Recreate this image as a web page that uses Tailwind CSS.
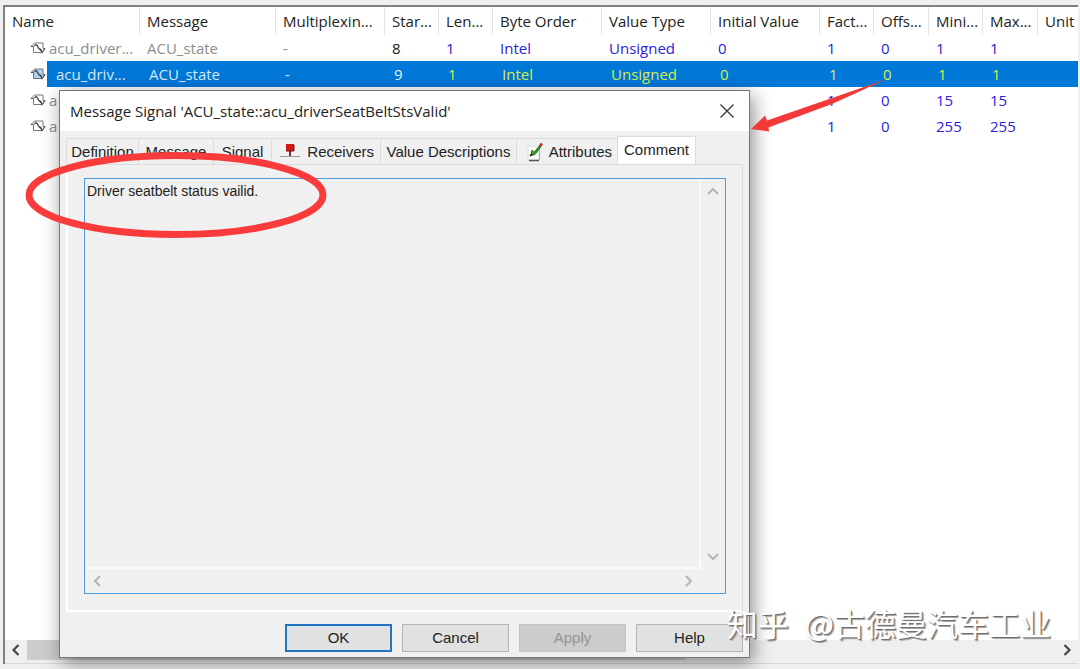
<!DOCTYPE html>
<html lang="en">
<head>
    <meta charset="UTF-8">
    <meta name="viewport" content="width=device-width, initial-scale=1.0">
    <title>Message Signal</title>
    <script src="https://cdn.jsdelivr.net/npm/@tailwindcss/browser@4"></script>
</head>
<body class="relative h-screen overflow-hidden bg-[#efefef] font-['Open_Sans',sans-serif] text-[15px] text-[#222]">
    <svg class="hidden">
        <symbol id="signal" viewBox="0 0 16 14">
            <path d="M1 5.500 4.500 2H13v5.500h2L12 11.500H3.500V5.500z" stroke="#777" />
            <path d="M1 5.500h2.500M10 7.500l2 4 3-4" fill="none" stroke="#555" stroke-width="1.200" />
            <path d="M4.500 5C6.500 2 7.500 5 8.500 7s2 2.500 3.500 2.500" fill="none" stroke="#444" stroke-width="1.400" />
        </symbol>
    </svg>

    <main class="h-full pt-[5px] pr-[2px] pb-[5px] pl-[3px] flex flex-col">
        <div class="flex-1 min-h-0 flex flex-col bg-white border-t-2 border-l-2 border-[#808080]">
            <div class="flex-1 min-h-0">
                <table class="w-full table-fixed border-separate border-spacing-0 text-left whitespace-nowrap">
                    <colgroup>
                        <col class="w-[135px]">
                        <col class="w-[136px]">
                        <col class="w-[109px]">
                        <col class="w-[54px]">
                        <col class="w-[54px]">
                        <col class="w-[109px]">
                        <col class="w-[109px]">
                        <col class="w-[109px]">
                        <col class="w-[54px]">
                        <col class="w-[55px]">
                        <col class="w-[54px]">
                        <col class="w-[55px]">
                        <col>
                    </colgroup>
                    <thead>
                        <tr class="h-7 [&>th]:p-0 [&>th]:pl-[7px] [&>th]:font-normal [&>th]:border-r [&>th]:border-[#e2e2e2] [&>th:last-child]:border-r-0">
                            <th>Name</th>
                            <th>Message</th>
                            <th>Multiplexin...</th>
                            <th>Star...</th>
                            <th>Len...</th>
                            <th>Byte Order</th>
                            <th>Value Type</th>
                            <th>Initial Value</th>
                            <th>Fact...</th>
                            <th>Offs...</th>
                            <th>Mini...</th>
                            <th>Max...</th>
                            <th>Unit</th>
                        </tr>
                    </thead>
                    <tbody class="text-[#2a22dd] [&>tr]:h-[26px] [&_td]:p-0 [&_td]:pl-[7px]">
                        <tr>
                            <td class="text-[#8c8c8c]">
                                <div class="flex items-center pl-[18px]">
                                    <svg class="w-4 h-[14px] mr-[3px] shrink-0" fill="#fff"><use href="#signal" /></svg>
                                    <span>acu_driver...</span>
                                </div>
                            </td>
                            <td class="text-[#8c8c8c]">ACU_state</td>
                            <td class="text-[#8c8c8c]">-</td>
                            <td class="text-[#222]">8</td>
                            <td>1</td>
                            <td>Intel</td>
                            <td>Unsigned</td>
                            <td>0</td>
                            <td>1</td>
                            <td>0</td>
                            <td>1</td>
                            <td>1</td>
                            <td></td>
                        </tr>
                        <tr class="text-[#d4ee4c] [&>td]:bg-[#0078d7] [&>td]:pl-[9px] [&>td:first-child]:bg-transparent [&>td:first-child]:pl-[7px]">
                            <td class="text-[#d5e9fa]">
                                <div class="flex items-center h-[26px] pl-[18px]">
                                    <svg class="w-4 h-[14px] mr-px shrink-0" fill="#a8d2f2"><use href="#signal" /></svg>
                                    <span class="flex-1 flex items-center h-full bg-[#0078d7] pl-[9px]">acu_driv...</span>
                                </div>
                            </td>
                            <td class="text-[#d5e9fa]">ACU_state</td>
                            <td class="text-[#d5e9fa]">-</td>
                            <td class="text-[#e6f2fc]">9</td>
                            <td>1</td>
                            <td>Intel</td>
                            <td>Unsigned</td>
                            <td>0</td>
                            <td>1</td>
                            <td>0</td>
                            <td>1</td>
                            <td>1</td>
                            <td></td>
                        </tr>
                        <tr>
                            <td class="text-[#8c8c8c]">
                                <div class="flex items-center pl-[18px]">
                                    <svg class="w-4 h-[14px] mr-[3px] shrink-0" fill="#fff"><use href="#signal" /></svg>
                                    <span>a</span>
                                </div>
                            </td>
                            <td></td>
                            <td></td>
                            <td></td>
                            <td></td>
                            <td></td>
                            <td></td>
                            <td></td>
                            <td>1</td>
                            <td>0</td>
                            <td>15</td>
                            <td>15</td>
                            <td></td>
                        </tr>
                        <tr>
                            <td class="text-[#8c8c8c]">
                                <div class="flex items-center pl-[18px]">
                                    <svg class="w-4 h-[14px] mr-[3px] shrink-0" fill="#fff"><use href="#signal" /></svg>
                                    <span>a</span>
                                </div>
                            </td>
                            <td></td>
                            <td></td>
                            <td></td>
                            <td></td>
                            <td></td>
                            <td></td>
                            <td></td>
                            <td>1</td>
                            <td>0</td>
                            <td>255</td>
                            <td>255</td>
                            <td></td>
                        </tr>
                    </tbody>
                </table>
            </div>
            <!-- list scrollbar -->
            <div class="flex h-6 bg-[#efefef] border-b border-[#d8d8d8]">
                <button type="button" aria-label="Scroll left" class="w-[22px] h-5 flex items-center justify-center">
                    <svg class="w-2 h-3" viewBox="0 0 8 12" fill="none" stroke="#444" stroke-width="2.200"><path d="M6.500 1 1.500 6l5 5" /></svg>
                </button>
                <div class="flex-1 flex h-5"><div class="w-[64%] bg-[#cdcdcd]"></div></div>
                <button type="button" aria-label="Scroll right" class="w-[22px] h-5 flex items-center justify-center">
                    <svg class="w-2 h-3" viewBox="0 0 8 12" fill="none" stroke="#444" stroke-width="2.200"><path d="m1.500 1 5 5-5 5" /></svg>
                </button>
            </div>
        </div>
    </main>

    <section role="dialog" aria-labelledby="dialog-title" class="absolute left-[59px] top-[90px] w-[691px] bg-[#f0f0f0] border border-[#777] shadow-[3px_5px_18px_rgba(0,0,0,0.45)]">
        <header class="flex items-center justify-between h-10 bg-white pl-[10px] pr-[14px]">
            <h1 id="dialog-title">Message Signal 'ACU_state::acu_driverSeatBeltStsValid'</h1>
            <button type="button" aria-label="Close">
                <svg class="w-4 h-4" viewBox="0 0 16 16" fill="none" stroke="#333" stroke-width="1.300"><path d="m1.500 1.500 13 13m0-13-13 13" /></svg>
            </button>
        </header>

        <div class="px-[6px] pt-[5px] font-['Liberation_Sans',sans-serif]">
            <div role="tablist" class="flex items-end text-[15px] leading-6">
                <button type="button" role="tab" class="w-[73px] h-[26px] border-t border-x border-[#dcdcdc]">Definition</button>
                <button type="button" role="tab" class="w-[75px] h-[26px] border-t border-r border-[#dcdcdc]">Message</button>
                <button type="button" role="tab" class="w-[58px] h-[26px] border-t border-r border-[#dcdcdc]">Signal</button>
                <button type="button" role="tab" class="w-[109px] h-[26px] flex justify-between items-center pl-[8px] pr-[6px] border-t border-r border-[#dcdcdc]">
                    <svg class="w-5 h-4" viewBox="0 0 20 16"><path d="M0 12.500h20" stroke="#999" /><path d="M10 7v5" stroke="#733" stroke-width="2" /><path d="M6 0h8v7H6z" fill="#d01818" /><path d="M6 7h8V1" fill="none" stroke="#801010" /></svg>
                    Receivers
                </button>
                <button type="button" role="tab" class="w-[136px] h-[26px] border-t border-r border-[#dcdcdc]">Value Descriptions</button>
                <button type="button" role="tab" class="w-[100px] h-[26px] flex justify-between items-center pl-[10px] pr-[5px] border-t border-[#dcdcdc]">
                    <svg class="w-4 h-5" viewBox="0 0 16 20"><path d="M1 4h11v14H1z" fill="#fafafa" stroke="#ddd" /><path d="M2 18.500h10" stroke="#555" stroke-width="1.500" /><path d="M12.500 6v12" stroke="#aaa" /><path d="m5 8 2 2.500L13 3l1 1.500-6 8-4 1z" fill="#3c9a22" stroke="#286d18" /><path d="m3 14 2-2" stroke="#222" stroke-width="1.500" /><path d="m13 4 2-2.500" stroke="#c22" stroke-width="2.500" /></svg>
                    Attributes
                </button>
                <button type="button" role="tab" aria-selected="true" class="w-[79px] h-7 pb-[2px] bg-white border-t border-x border-[#dcdcdc]">Comment</button>
            </div>

            <div role="tabpanel" class="px-4 pt-[13px] pb-4 border-t border-r border-[#dcdcdc] border-l-2 border-l-white border-b-2 border-b-white">
                <div class="grid grid-cols-[1fr_24px] grid-rows-[390px_24px] border border-[#4a9be0]">
                    <textarea aria-label="Comment" class="resize-none outline-none px-[2px] text-sm leading-6 border-r-2 border-b-2 border-[#fafafa]">Driver seatbelt status vailid.</textarea>
                    <div class="flex flex-col justify-between items-center py-2">
                        <svg class="w-3 h-2" viewBox="0 0 12 8" fill="none" stroke="#b5b5b5" stroke-width="2"><path d="m1 7 5-5 5 5" /></svg>
                        <svg class="w-3 h-2" viewBox="0 0 12 8" fill="none" stroke="#b5b5b5" stroke-width="2"><path d="m1 1 5 5 5-5" /></svg>
                    </div>
                    <div class="flex justify-between items-center px-2">
                        <svg class="w-2 h-3" viewBox="0 0 8 12" fill="none" stroke="#b5b5b5" stroke-width="2"><path d="M7 1 2 6l5 5" /></svg>
                        <svg class="w-2 h-3" viewBox="0 0 8 12" fill="none" stroke="#b5b5b5" stroke-width="2"><path d="m1 1 5 5-5 5" /></svg>
                    </div>
                </div>
            </div>

            <div class="flex justify-end gap-[10px] pt-3 pb-[5px] text-[15px]">
                <button type="button" class="w-[107px] h-7 bg-[#e1e1e1] border-2 border-[#2373bd] inset-ring inset-ring-[#d3e9fb]">OK</button>
                <button type="button" class="w-[107px] h-7 bg-[#e1e1e1] border border-[#b4b4b4]">Cancel</button>
                <button type="button" disabled class="w-[107px] h-7 bg-[#cccccc] border border-[#c4c4c4] text-[#939393]">Apply</button>
                <button type="button" class="w-[107px] h-7 bg-[#e1e1e1] border border-[#b4b4b4]">Help</button>
            </div>
        </div>
    </section>

    <!-- red markings -->
    <svg class="absolute left-0 top-0 w-[1080px] h-[669px] pointer-events-none" viewBox="0 0 1080 669">
        <ellipse cx="176" cy="195" rx="147" ry="39.500" fill="none" stroke="#f93b3b" stroke-width="7" />
        <path d="M887 79 767 120.500 765 115.500 751 129 769 131.500 768.500 127.500 832 104z" fill="#f33a38" />
    </svg>

    <p class="absolute right-[29px] bottom-[26px] flex gap-4 text-[31px] leading-10 whitespace-nowrap text-white font-['Noto_Sans_CJK_SC',sans-serif] [text-shadow:1px_1px_1px_#666,2px_2px_1px_#aaa]" lang="zh">
        <span>知乎</span>
        <span>@古德曼汽车工业</span>
    </p>
</body>
</html>
